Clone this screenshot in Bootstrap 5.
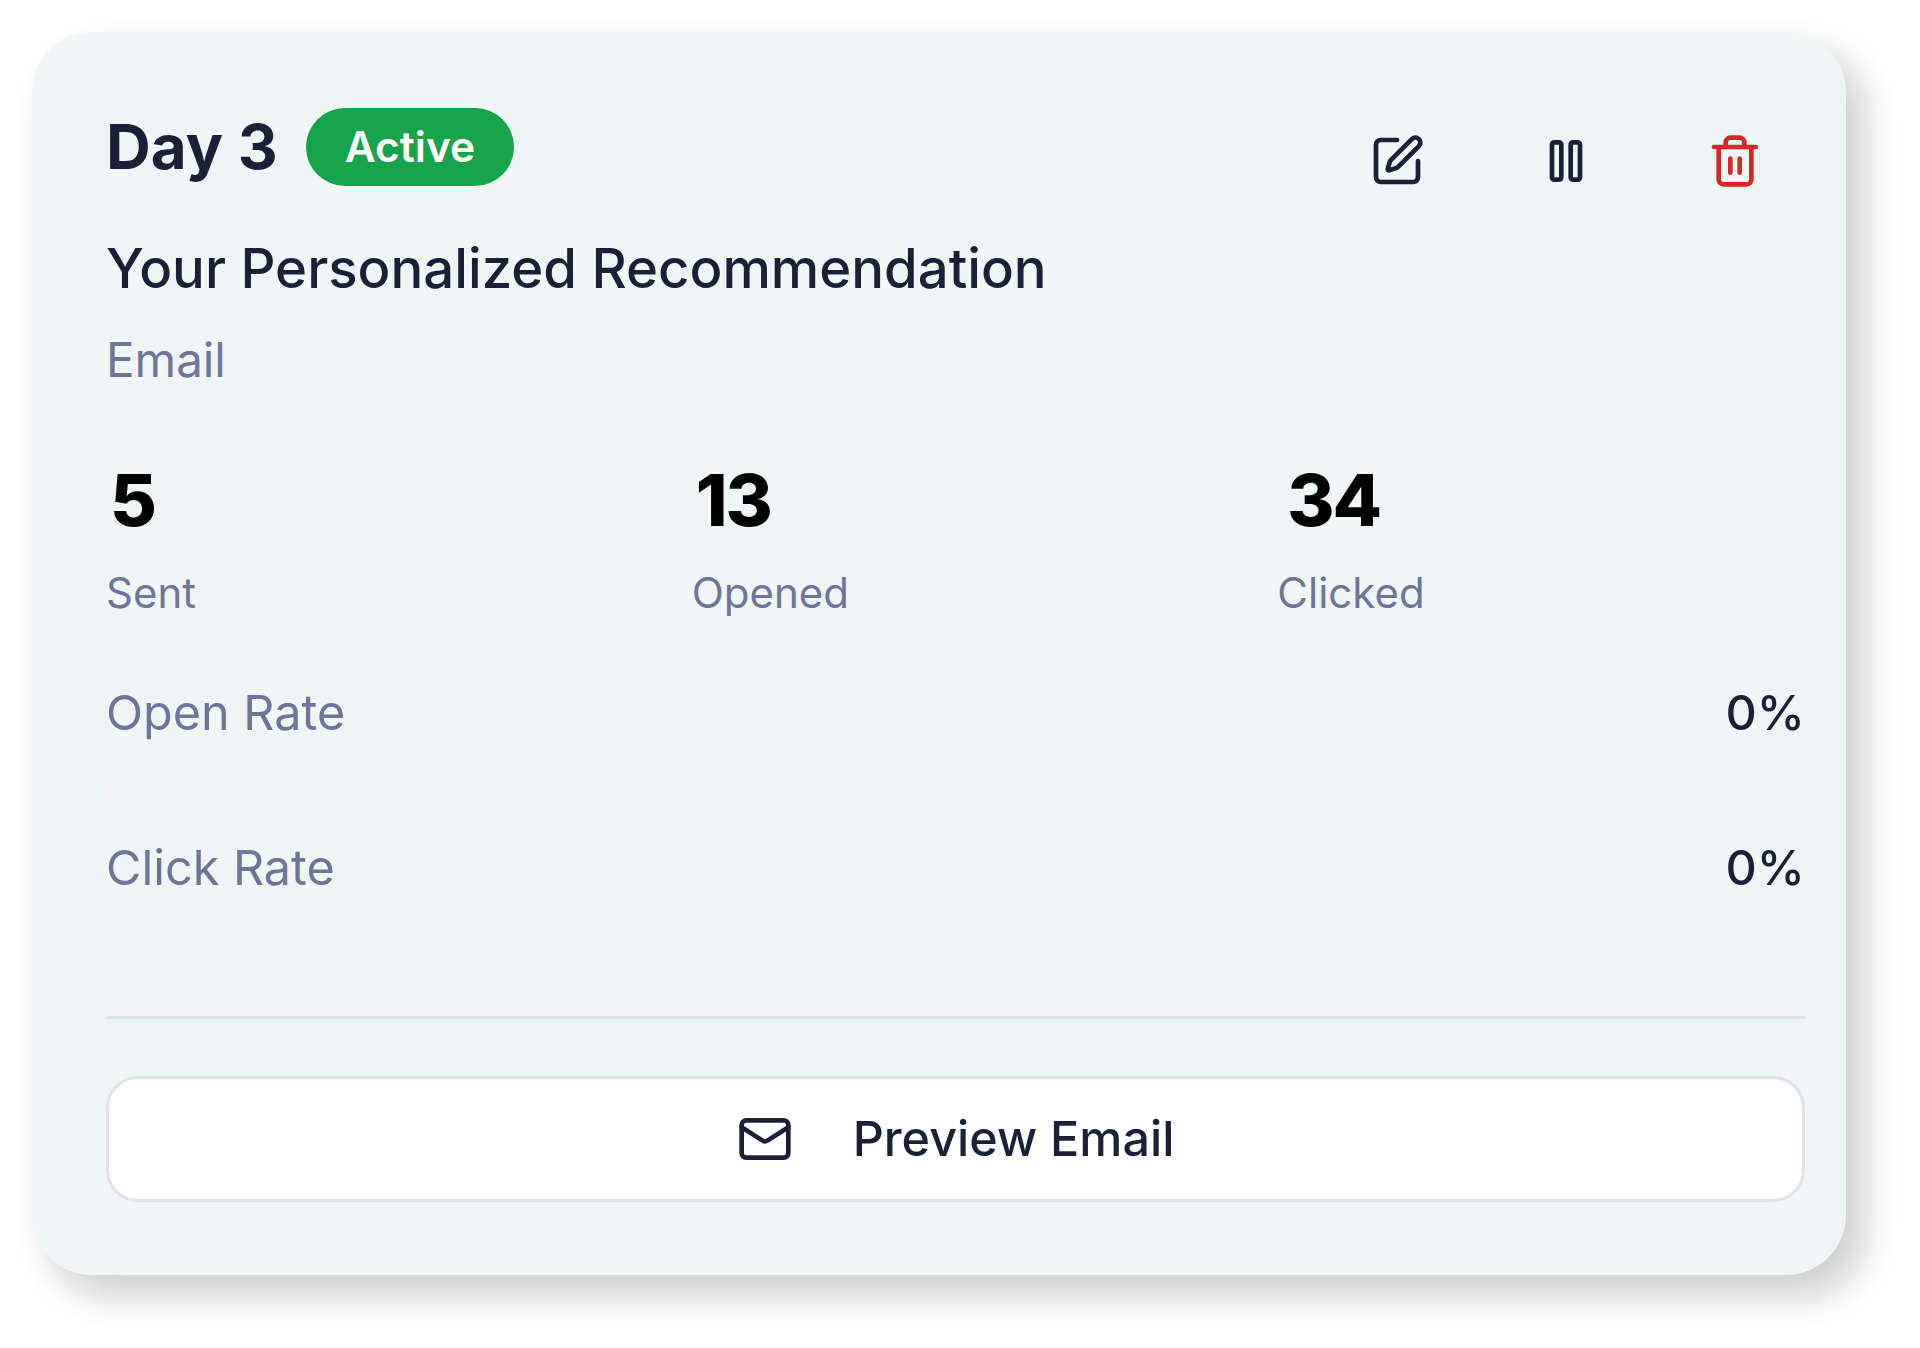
<!DOCTYPE html>
<html lang="en">
<head>
  <meta charset="UTF-8">
  <title>Day 3</title>
  <link href="https://cdn.jsdelivr.net/npm/bootstrap@5.3.0/dist/css/bootstrap.min.css" rel="stylesheet">
  <style>
    body {
      background-color: #fff;
      min-height: 100vh;
      padding: 32px 74px 32px 32px;
      font-family: Inter, "Liberation Sans", sans-serif;
      color: #1a2038;
    }
    .step-box {
      background-color: #eef7f5;
      border-radius: 60px;
      padding: 76px 41px 73px 74px;
      box-shadow: 18px 20px 40px rgba(0,0,0,0.2);
    }
    .day-title {
      font-size: 62px;
      font-weight: 700;
      line-height: 78px;
      margin: 0;
    }
    .head-left { gap: 28px; }
    .state-pill {
      background-color: #16a34a;
      color: #fff;
      font-size: 42.5px;
      font-weight: 600;
      line-height: 78px;
      padding: 0 39px;
      border-radius: 39px;
    }
    .tool-set { margin-top: 25px; margin-right: 42px; gap: 113px; }
    .tool-icon {
      width: 56px;
      height: 56px;
      fill: none;
      stroke: currentColor;
      stroke-width: 2;
      stroke-linecap: round;
      stroke-linejoin: round;
    }
    .tool-del { color: #dc2626; }
    .mail-title { font-size: 54.5px; font-weight: 500; line-height: 65px; margin: 47px 0 0; }
    .mail-kind { font-size: 47.5px; line-height: 55px; color: #6f7599; margin-top: 31px; }
    .stat-row { margin-top: 70px; display: grid; grid-template-columns: repeat(3, 1fr); column-gap: 58px; }
    .stat-num { font-size: 72px; font-weight: 800; line-height: 86px; color: #000; letter-spacing: -2px; }
    .stat-shift { padding-left: 10px; }
    .stat-name { font-size: 42px; line-height: 50px; color: #6f7599; margin-top: 25px; }
    .rate-row { font-size: 48.5px; line-height: 55px; margin-top: 36px; }
    .rate-first { margin-top: 67px; }
    .rate-name { color: #6f7599; }
    .rate-val { font-weight: 500; }
    .rate-track { height: 28px; margin-top: 36px; border-radius: 14px; background-color: #f3f4f7; }
    .split-line { height: 3px; background-color: #e2e2ee; margin-top: 57px; }
    .preview-btn {
      margin-top: 57px;
      height: 126px;
      background-color: #fff;
      border: 3px solid #e2e2ee;
      border-radius: 32px;
      color: #1a2038;
      font-size: 48.5px;
      font-weight: 500;
      gap: 60px;
    }
    .preview-btn:hover { background-color: #fff; border-color: #e2e2ee; color: #1a2038; }
  </style>
</head>
<body>

  <div class="step-box">
    <div class="d-flex justify-content-between align-items-start">
      <div class="head-left d-flex align-items-center">
        <h2 class="day-title">Day 3</h2>
        <span class="state-pill">Active</span>
      </div>
      <div class="tool-set d-flex">
        <svg class="tool-icon" viewBox="0 0 24 24"><path d="M12 3H5a2 2 0 0 0-2 2v14a2 2 0 0 0 2 2h14a2 2 0 0 0 2-2v-7"/><path d="M18.375 2.625a1 1 0 0 1 3 3l-9.013 9.014a2 2 0 0 1-.853.505l-2.873.84a.5.5 0 0 1-.62-.62l.84-2.873a2 2 0 0 1 .506-.852z"/></svg>
        <svg class="tool-icon" viewBox="0 0 24 24"><rect x="6" y="4" width="4" height="16" rx="1"/><rect x="14" y="4" width="4" height="16" rx="1"/></svg>
        <svg class="tool-icon tool-del" viewBox="0 0 24 24"><path d="M3 6h18"/><path d="M19 6v14a2 2 0 0 1-2 2H7a2 2 0 0 1-2-2V6"/><path d="M8 6V4a2 2 0 0 1 2-2h4a2 2 0 0 1 2 2v2"/><path d="M10 11v6"/><path d="M14 11v6"/></svg>
      </div>
    </div>

    <h3 class="mail-title">Your Personalized Recommendation</h3>
    <div class="mail-kind">Email</div>

    <div class="stat-row">
      <div>
        <div class="stat-num ps-1">5</div>
        <div class="stat-name">Sent</div>
      </div>
      <div>
        <div class="stat-num ps-1">13</div>
        <div class="stat-name">Opened</div>
      </div>
      <div>
        <div class="stat-num stat-shift">34</div>
        <div class="stat-name">Clicked</div>
      </div>
    </div>

    <div class="rate-row rate-first d-flex justify-content-between">
      <span class="rate-name">Open Rate</span>
      <span class="rate-val">0%</span>
    </div>
    <div class="rate-track"></div>
    <div class="rate-row d-flex justify-content-between">
      <span class="rate-name">Click Rate</span>
      <span class="rate-val">0%</span>
    </div>
    <div class="rate-track"></div>

    <div class="split-line"></div>

    <button type="button" class="btn preview-btn w-100 d-flex align-items-center justify-content-center">
      <svg class="tool-icon" viewBox="0 0 24 24"><rect x="2" y="4" width="20" height="16" rx="2"/><path d="m22 7-8.97 5.7a1.94 1.94 0 0 1-2.06 0L2 7"/></svg>
      Preview Email
    </button>
  </div>

</body>
</html>
